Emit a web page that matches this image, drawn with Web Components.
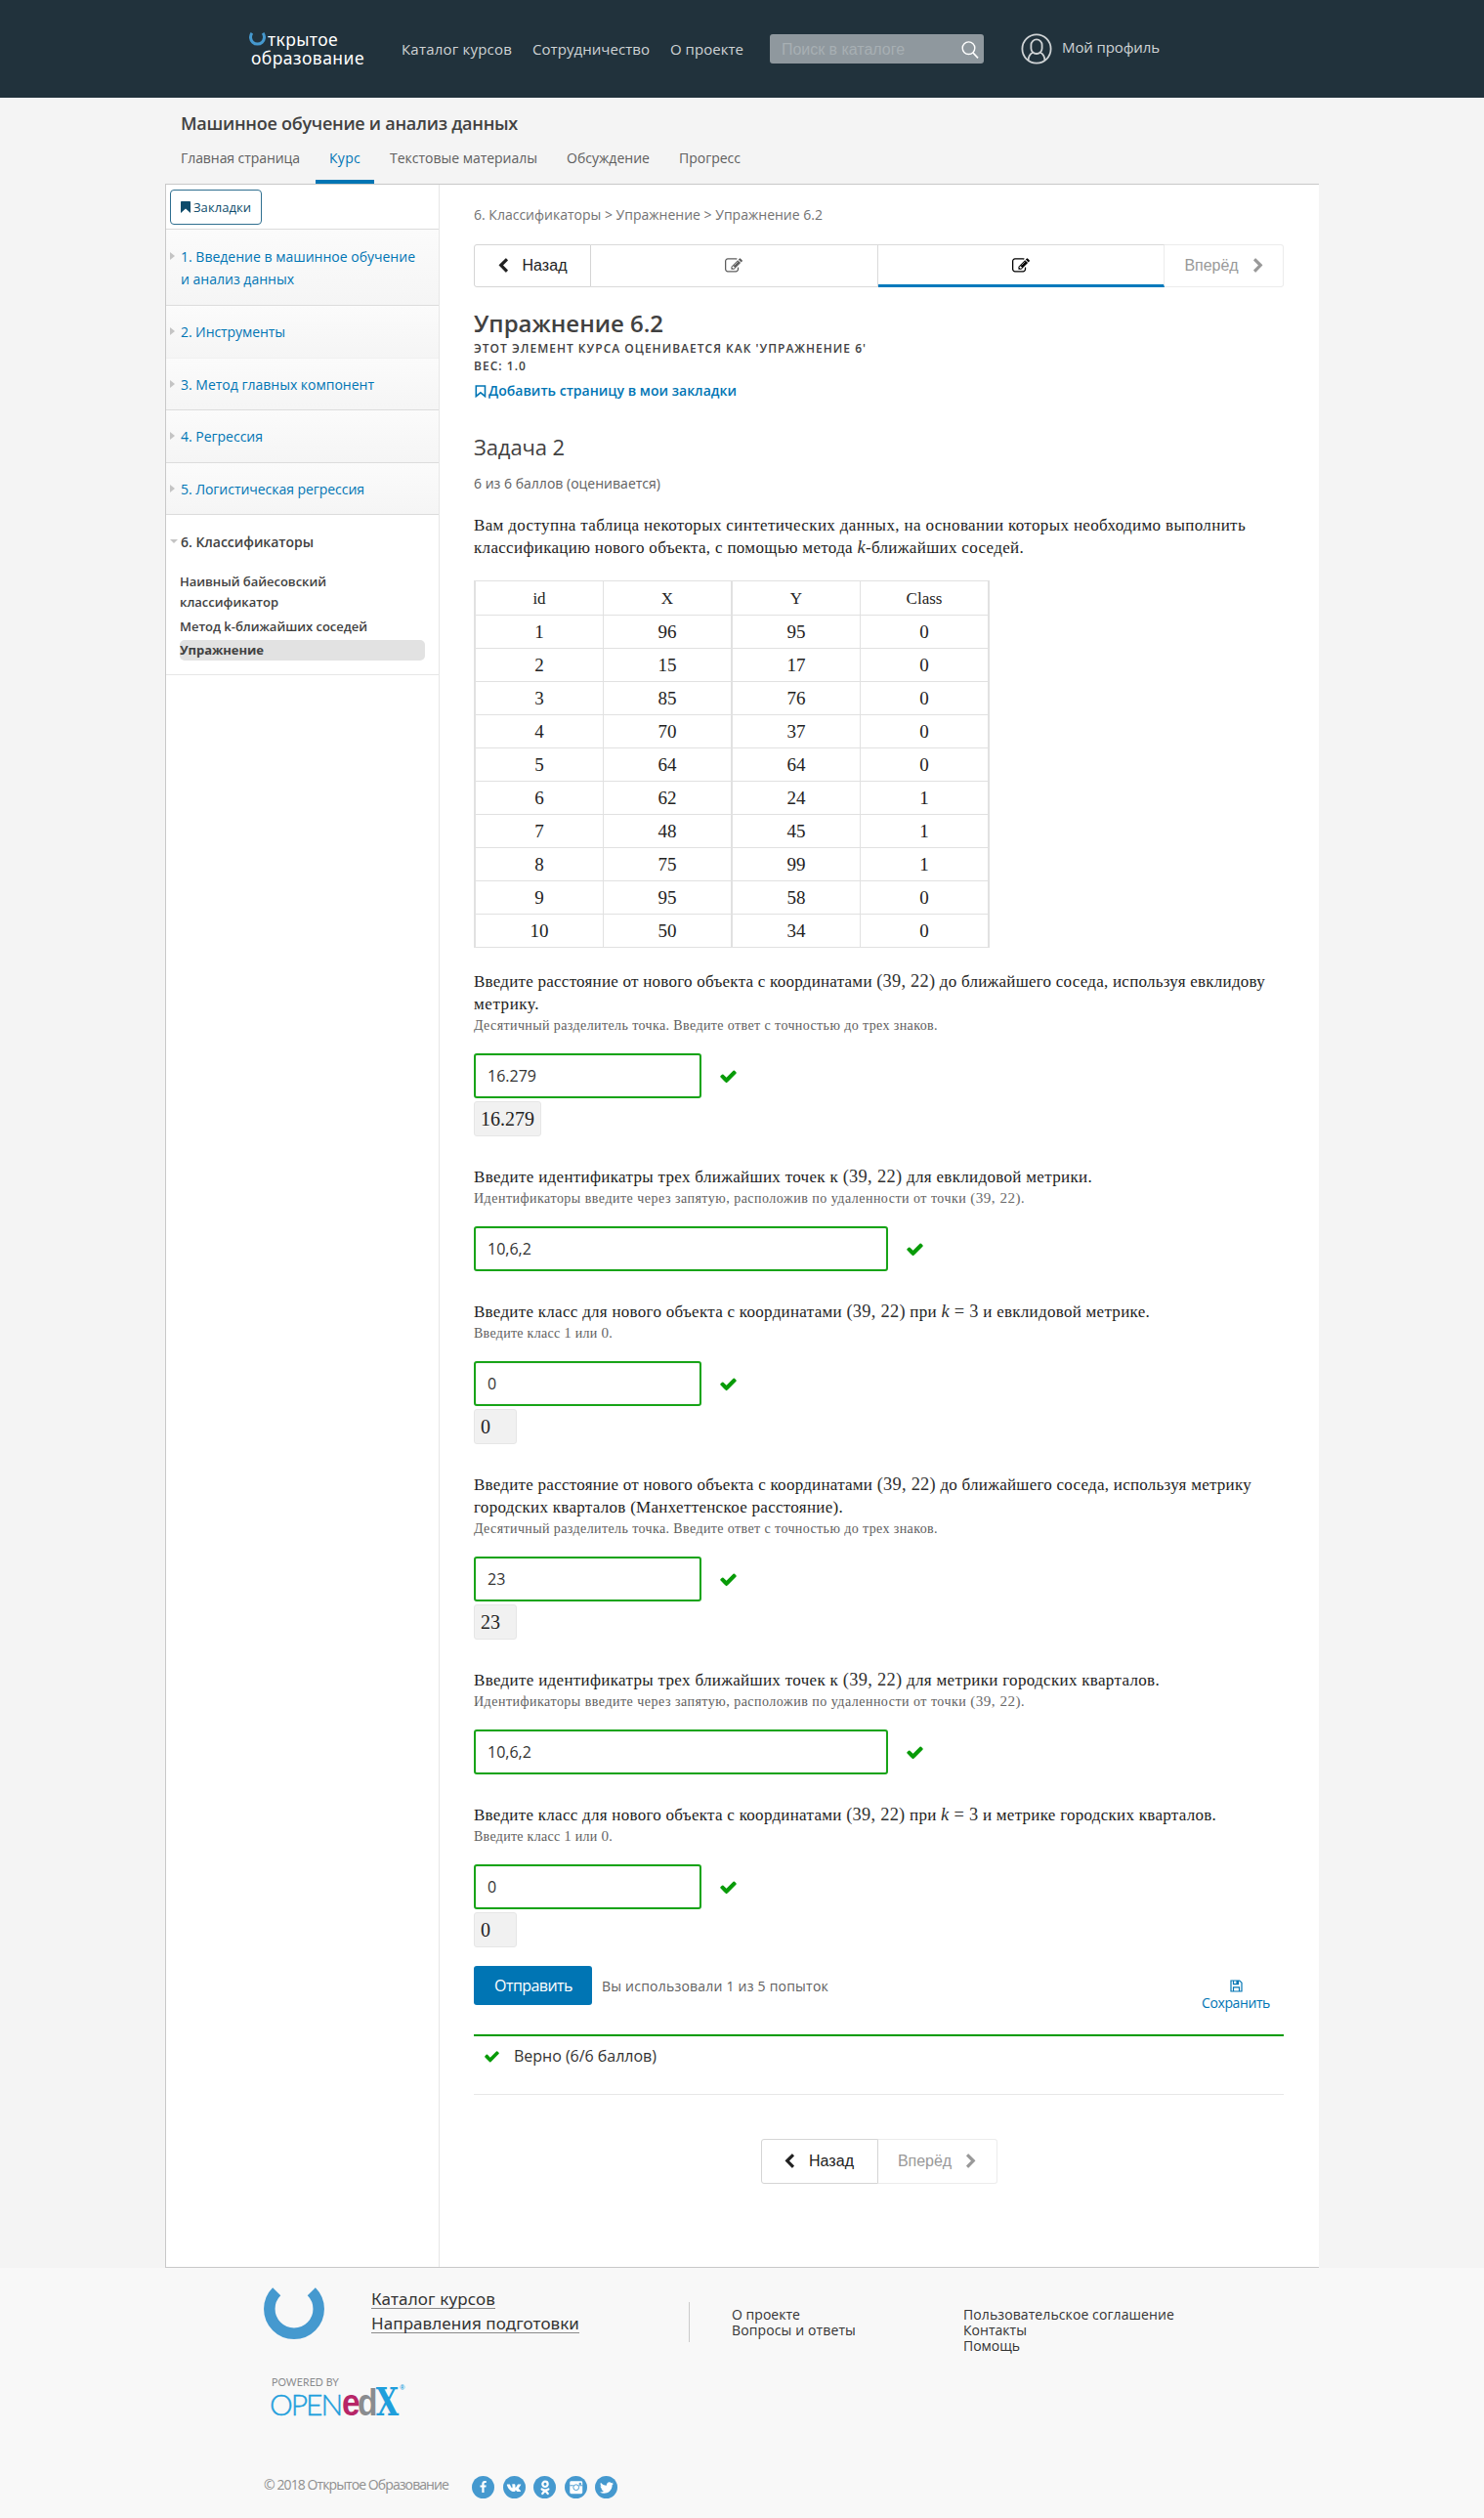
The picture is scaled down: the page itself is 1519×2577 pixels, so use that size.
<!DOCTYPE html>
<html lang="ru">
<head>
<meta charset="utf-8">
<title>Упражнение 6.2</title>
<style>
body{margin:0;background:#f4f4f4;font-family:"Open Sans","Noto Sans",sans-serif;color:#414141;width:1519px}
</style>
</head>
<body>
<site-header></site-header>
<course-tabs></course-tabs>
<course-frame>
  <course-sidebar slot="side"></course-sidebar>
  <lesson-head></lesson-head>
  <data-grid></data-grid>
  <problem-question value="16.279" preview="16.279">
    <fit-line w="810">Введите расстояние от нового объекта с координатами <math-run>(39, 22)</math-run> до ближайшего соседа, используя евклидову</fit-line>
    <fit-line w="67">метрику.</fit-line>
    <fit-line slot="hint" w="475">Десятичный разделитель точка. Введите ответ с точностью до трех знаков.</fit-line>
  </problem-question>
  <problem-question value="10,6,2" wide>
    <fit-line w="633">Введите идентификатры трех ближайших точек к <math-run>(39, 22)</math-run> для евклидовой метрики.</fit-line>
    <fit-line slot="hint" w="564">Идентификаторы введите через запятую, расположив по удаленности от точки <math-run>(39, 22)</math-run>.</fit-line>
  </problem-question>
  <problem-question value="0" preview="0">
    <fit-line w="692">Введите класс для нового объекта с координатами <math-run>(39, 22)</math-run> при <math-run><i>k</i> = 3</math-run> и евклидовой метрике.</fit-line>
    <fit-line slot="hint" w="142">Введите класс <math-run>1</math-run> или <math-run>0</math-run>.</fit-line>
  </problem-question>
  <problem-question value="23" preview="23">
    <fit-line w="796">Введите расстояние от нового объекта с координатами <math-run>(39, 22)</math-run> до ближайшего соседа, используя метрику</fit-line>
    <fit-line w="378">городских кварталов (Манхеттенское расстояние).</fit-line>
    <fit-line slot="hint" w="475">Десятичный разделитель точка. Введите ответ с точностью до трех знаков.</fit-line>
  </problem-question>
  <problem-question value="10,6,2" wide>
    <fit-line w="702">Введите идентификатры трех ближайших точек к <math-run>(39, 22)</math-run> для метрики городских кварталов.</fit-line>
    <fit-line slot="hint" w="564">Идентификаторы введите через запятую, расположив по удаленности от точки <math-run>(39, 22)</math-run>.</fit-line>
  </problem-question>
  <problem-question value="0" preview="0">
    <fit-line w="760">Введите класс для нового объекта с координатами <math-run>(39, 22)</math-run> при <math-run><i>k</i> = 3</math-run> и метрике городских кварталов.</fit-line>
    <fit-line slot="hint" w="142">Введите класс <math-run>1</math-run> или <math-run>0</math-run>.</fit-line>
  </problem-question>
  <problem-footer></problem-footer>
</course-frame>
<site-footer></site-footer>

<script>
const define = (name, html, setup) => customElements.define(name, class extends HTMLElement {
  connectedCallback() {
    if (this.shadowRoot) return;
    const root = this.attachShadow({ mode: 'open' });
    root.innerHTML = typeof html === 'function' ? html(this) : html;
    if (setup) setup(this, root);
  }
});

const FA = d => ({ box: '0 0 1792 1792', body: `<path fill="currentColor" d="${d}"/>` });
const ICONS = {
  check: FA('M1671 566q0 40-28 68l-724 724-136 136q-28 28-68 28t-68-28l-136-136-362-362q-28-28-28-68t28-68l136-136q28-28 68-28t68 28l294 295 656-657q28-28 68-28t68 28l136 136q28 28 28 68z'),
  left: FA('M1427 301l-531 531 531 531q19 19 19 45t-19 45l-166 166q-19 19-45 19t-45-19l-742-742q-19-19-19-45t19-45l742-742q19-19 45-19t45 19l166 166q19 19 19 45t-19 45z'),
  right: FA('M1363 877l-742 742q-19 19-45 19t-45-19l-166-166q-19-19-19-45t19-45l531-531-531-531q-19-19-19-45t19-45l166-166q19-19 45-19t45 19l742 742q19 19 19 45t-19 45z'),
  edit: FA('M888 1184l116-116-152-152-116 116v56h96v96h56zm440-720q-16-16-33 1l-350 350q-17 17-1 33t33-1l350-350q17-17 1-33zm80 594v190q0 119-84.5 203.5t-203.5 84.5h-832q-119 0-203.5-84.5t-84.5-203.5v-832q0-119 84.5-203.5t203.5-84.5h832q63 0 117 25 15 7 18 23 3 17-9 29l-49 49q-14 14-32 8-23-6-45-6h-832q-66 0-113 47t-47 113v832q0 66 47 113t113 47h832q66 0 113-47t47-113v-126q0-13 9-22l64-64q15-15 35-7t20 29zm-96-738l288 288-672 672h-288v-288zm444 132l-92 92-288-288 92-92q28-28 68-28t68 28l152 152q28 28 28 68t-28 68z'),
  twitter: FA('M1684 408q-67 98-162 167 1 14 1 42 0 130-38 259.5t-115.5 248.5-184.5 210.5-258 146-323 54.5q-271 0-496-145 35 4 78 4 225 0 401-138-105-2-188-64.5t-114-159.5q33 5 61 5 43 0 85-11-112-23-185.5-111.5t-73.5-205.5v-4q68 38 146 41-66-44-105-115t-39-154q0-88 44-163 121 149 294.5 238.5t371.5 99.5q-8-38-8-74 0-134 94.5-228.5t228.5-94.5q140 0 236 102 109-21 205-78-37 115-142 178 93-10 186-50z'),
  facebook: FA('M1343 12v264h-157q-86 0-116 36t-30 108v189h293l-39 296h-254v759h-306v-759h-255v-296h255v-218q0-186 104-288.5t277-102.5q147 0 228 12z'),
  bookmark: { box: '0 0 10 12', body: '<path fill="currentColor" d="M0 .8Q0 0 .8 0H9.2Q10 0 10 .8V12L5 7.6 0 12z"/>' },
  bookmarkO: { box: '0 0 12 13', body: '<path fill="none" stroke="currentColor" stroke-width="1.6" d="M1.3 1h9.2v10.6L5.9 7.8 1.3 11.6z"/>' },
  floppy: { box: '0 0 13 13', body: '<path fill="none" stroke="currentColor" stroke-width="1.2" d="M1 1h8.8L12 3.2V12H1zM3.5 12V7.8h6V12M3.5 1v3.6h5V1"/><path fill="currentColor" d="M6.4 1h2v3h-2z"/>' },
  search: { box: '0 0 18 18', body: '<circle cx="7.5" cy="7.2" r="6.3" fill="none" stroke="currentColor" stroke-width="1.4"/><path stroke="currentColor" stroke-width="1.7" d="M12 12l5 5.3"/>' },
  user: { box: '0 0 32 32', body: '<g fill="none" stroke="currentColor" stroke-width="1.8"><circle cx="16" cy="16" r="14.6"/><rect x="10.4" y="6.4" width="11.2" height="14.6" rx="5.6"/><path d="M7.6 27.6c.2-5 2-6.6 4.7-7.8M24.4 27.6c-.2-5-2-6.6-4.7-7.8"/></g>' },
  vk: { box: '0 0 24 24', body: '<path fill="currentColor" d="M4.5 8.8h2.3c.2 0 .4.1.5.4.5 1.5 1.3 2.9 2 3.5.4.3.6.1.6-.4v-1.9c0-.7-.2-1-.8-1.2.3-.5 1-.7 2-.7 1.5 0 1.9.3 1.9 1.3v2.1c0 .5.3.6.6.3.7-.7 1.4-1.8 1.9-3 .1-.3.3-.4.6-.4h2.4c.6 0 .7.3.5.7-.5 1.2-1.4 2.2-2.2 3.2-.4.5-.3.7.1 1.1.7.7 1.5 1.4 1.9 2.2.2.5 0 .8-.6.8h-2.3c-.8 0-1.2-.5-1.7-1-.7-.8-1.2-.9-1.2.2 0 .6-.2.8-.8.8-3.8.1-6.6-2.6-8.2-7.2-.1-.5 0-.8.5-.8z"/>' },
  ok: { box: '0 0 24 24', body: '<g fill="none" stroke="currentColor" stroke-width="2.4" stroke-linecap="round"><circle cx="12" cy="8" r="2.9"/><path d="M8.3 13.6c2.3 1.5 5.1 1.5 7.4 0M12 15l-3 3.6M12 15l3 3.6"/></g>' },
  photo: { box: '0 0 24 24', body: '<rect x="5.5" y="5.5" width="13.5" height="13.5" rx="1.5" fill="currentColor"/><g fill="none" stroke="#4599cf"><path d="M5.5 10.2h3.7M15 10.2h4"/><circle cx="12.2" cy="12.2" r="3"/><path d="M15.7 7.7h1.6v1.3h-1.6z"/></g>' }
};

/* Inline vector icon: name + size */
define('ui-icon', el => {
  const i = ICONS[el.getAttribute('name')], s = el.getAttribute('size') || 16;
  return `<style>:host{display:inline-flex;flex:none}svg{display:block}</style>
  <svg width="${s}" height="${el.getAttribute('h') || s}" viewBox="${i.box}" aria-hidden="true">${i.body}</svg>`;
});

/* Formula fragment in running text */
define('math-run', `<style>:host{font-family:"Liberation Serif",serif;font-size:1.08em;line-height:1;opacity:.93}</style><slot></slot>`);

/* Single line of text tracked to a given measure */
define('fit-line', `<style>:host{display:block;white-space:nowrap;flex:none}span{display:inline-block;line-height:inherit;vertical-align:top}</style><span><slot></slot></span>`,
  (el, root) => {
    const w = +el.getAttribute('w'), n = el.textContent.length;
    el.style.width = w + 'px';
    requestAnimationFrame(() => {
      const now = root.querySelector('span').getBoundingClientRect().width;
      if (now) el.style.letterSpacing = (w - now) / n + 'px';
    });
  });

define('site-header', `<style>
:host{display:flex;align-items:center;box-sizing:border-box;height:100px;background:#21323c;padding-left:255px;color:#cfd3d5;font-size:15px}
.logo{display:grid;width:156px;color:#fff;font-size:17.5px;line-height:19px;font-family:"Noto Sans","Open Sans",sans-serif;padding-bottom:1px}
.top{display:flex}.top svg{margin-right:2px}.second{margin-left:2px}
nav{display:flex;gap:21px;width:377px}
.search{display:flex;align-items:center;justify-content:space-between;box-sizing:border-box;width:219px;height:30px;padding:0 5px 0 12px;border-radius:3px;background:#8f989e;color:#a7afb3;font:16px "Liberation Sans",sans-serif;margin-right:38px}
ui-icon{color:#fff}.search ui-icon{margin-top:1px}.search fit-line{padding-top:1px}
.me{display:flex;align-items:center;gap:10px}.me ui-icon{color:#cfd3d5}.me fit-line{padding-bottom:4px}
</style>
<div class="logo"><div class="top"><svg width="17" height="18" viewBox="0 0 17 18"><path d="M2.9 2.9A7 7 0 1 0 14.1 2.9" fill="none" stroke="#4599cf" stroke-width="3"/></svg><fit-line w="72">ткрытое</fit-line></div><fit-line class="second" w="116">образование</fit-line></div>
<nav><fit-line w="113">Каталог курсов</fit-line><fit-line w="120">Сотрудничество</fit-line><fit-line w="75">О проекте</fit-line></nav>
<div class="search"><fit-line w="126">Поиск в каталоге</fit-line><ui-icon name="search" size="18"></ui-icon></div>
<div class="me"><ui-icon name="user" size="32"></ui-icon><fit-line w="100">Мой профиль</fit-line></div>`);

define('course-tabs', `<style>
:host{display:block;box-sizing:border-box;height:88px;padding:13px 0 0 185px;color:#5e5e5e;font-size:14px}
h1{margin:0;font-size:18px;font-weight:600;line-height:26px;color:#414141}
nav{display:flex;gap:30px;margin-top:13px;line-height:20px}
.on{color:#0075b4;padding:0 14px 12px;margin:0 -14px;border-bottom:4px solid #0075b4}
</style>
<h1><fit-line w="345">Машинное обучение и анализ данных</fit-line></h1>
<nav><fit-line w="122">Главная страница</fit-line><div class="on"><fit-line w="32">Курс</fit-line></div><fit-line w="151">Текстовые материалы</fit-line><fit-line w="85">Обсуждение</fit-line><fit-line w="63">Прогресс</fit-line></nav>`);

define('course-frame', `<style>
:host{display:flex;box-sizing:border-box;width:1181px;height:2133px;margin-left:169px;background:#fff;border:solid #c8c8c8;border-width:1px 0 1px 1px}
aside{flex:none;width:279px;border-right:1px solid #e7e7e7}
main{flex:none;width:829px;padding:21px 36px 0 35px}
</style><aside><slot name="side"></slot></aside><main><slot></slot></main>`);

define('side-chapter', `<style>
:host{display:flex;box-sizing:border-box;padding:15px 0 0 4px;height:54px;border-bottom:1px solid #dcdcdc;background:linear-gradient(#fbfbfb,#f5f5f5);color:#0075b4;font-size:14px;line-height:23px}
i{flex:none;width:0;height:0;margin:7px 6px 0 0;border:solid transparent;border-width:4px 0 4px 5px;border-left-color:#c4c4c4}
:host([open]) i{border-width:4px 4px 0 4px;border-color:#c4c4c4 transparent transparent;margin:9px 3px 0 0}
</style><i></i><div><slot></slot></div>`);

define('course-sidebar', `<style>
:host{display:block}
.mark{box-sizing:border-box;height:46px;padding:5px 0 0 4px;border-bottom:1px solid #dcdcdc}
button{display:flex;align-items:center;gap:3px;box-sizing:border-box;width:94px;height:36px;padding:0 0 0 10px;border:1px solid #2f6f90;border-radius:4px;background:#fff;color:#0d4b6b;font:13px "Open Sans",sans-serif}
.open{background:#fff;border:0;color:#414141;font-weight:600;height:auto;padding-top:16px}
.sub{padding:19px 14px 14px 14px;font-size:13px;line-height:21px;font-weight:600;color:#414141;border-bottom:1px solid #e7e7e7}
.sub .m{margin:4px 0 3px}
.cur{background:#e2e2e2;border-radius:5px;font-weight:700}
</style>
<div class="mark"><button><ui-icon name="bookmark" size="10" h="12"></ui-icon><fit-line w="59">Закладки</fit-line></button></div>
<side-chapter style="height:78px;padding-top:16px"><fit-line w="240">1. Введение в машинное обучение</fit-line><fit-line w="116">и анализ данных</fit-line></side-chapter>
<side-chapter style="border-color:#f0f0f0"><fit-line w="107">2. Инструменты</fit-line></side-chapter>
<side-chapter style="height:53px"><fit-line w="198">3. Метод главных компонент</fit-line></side-chapter>
<side-chapter><fit-line w="84">4. Регрессия</fit-line></side-chapter>
<side-chapter style="height:53px"><fit-line w="188">5. Логистическая регрессия</fit-line></side-chapter>
<side-chapter class="open" open><fit-line w="136">6. Классификаторы</fit-line></side-chapter>
<div class="sub"><fit-line w="150">Наивный байесовский</fit-line><fit-line w="101">классификатор</fit-line><fit-line class="m" w="192">Метод k-ближайших соседей</fit-line><div class="cur"><fit-line w="86">Упражнение</fit-line></div></div>`);

define('nav-button', el => {
  const next = el.hasAttribute('next');
  const icon = `<ui-icon name="${next ? 'right' : 'left'}" size="16"></ui-icon>`;
  return `<style>:host{display:flex;align-items:center;justify-content:center;gap:12px;box-sizing:border-box;flex:none;font:16px "Liberation Sans",sans-serif;padding-${next ? 'left' : 'right'}:3px;color:${next ? '#999' : '#222'};border:1px solid ${next ? '#ececec' : '#d5d5d5'};${next ? 'border-left:0;border-radius:0 3px 3px 0' : 'border-radius:3px 0 0 3px'}}</style>
  ${next ? `<fit-line w="55">Вперёд</fit-line>${icon}` : `${icon}<fit-line w="46">Назад</fit-line>`}`;
});

define('lesson-head', `<style>
:host{display:block;font-size:14px;line-height:20px}
.crumb{color:#727272}
.seq{display:flex;height:44px;margin:20px 0}
.seq nav-button{width:120px}.seq nav-button[next]{width:122px}
.tab{flex:1;display:flex;align-items:center;justify-content:center;border:solid #dadada;border-width:1px 1px 1px 0;color:#5e5e5e}
.tab.on{color:#000;border-bottom:3px solid #0079bc;border-right-color:#ececec}.tab.on ui-icon{margin-top:2px}
h2{margin:0;font-size:24px;line-height:34px;font-weight:600}
.meta{font-size:12px;line-height:18px;font-weight:600}
.link{display:flex;align-items:center;gap:2px;margin:6px 0 32px;padding-left:1px;font-weight:600;color:#0075b4}
h3{margin:0 0 13px;font-size:22px;line-height:30px;font-weight:400}
.score{color:#5e5e5e}
p{margin:21px 0 22px;font:17px/23px "Liberation Serif",serif;color:#222}
</style>
<div class="crumb"><fit-line w="357">6. Классификаторы &gt; Упражнение &gt; Упражнение 6.2</fit-line></div>
<div class="seq"><nav-button></nav-button><div class="tab"><ui-icon name="edit" size="18"></ui-icon></div><div class="tab on"><ui-icon name="edit" size="18"></ui-icon></div><nav-button next></nav-button></div>
<h2><fit-line w="194">Упражнение 6.2</fit-line></h2>
<div class="meta"><fit-line w="402">ЭТОТ ЭЛЕМЕНТ КУРСА ОЦЕНИВАЕТСЯ КАК 'УПРАЖНЕНИЕ 6'</fit-line><fit-line w="54">ВЕС: 1.0</fit-line></div>
<div class="link"><ui-icon name="bookmarkO" size="12" h="13"></ui-icon><fit-line w="254">Добавить страницу в мои закладки</fit-line></div>
<h3><fit-line w="93">Задача 2</fit-line></h3>
<div class="score"><fit-line w="191">6 из 6 баллов (оценивается)</fit-line></div>
<p><fit-line w="790">Вам доступна таблица некоторых синтетических данных, на основании которых необходимо выполнить</fit-line><fit-line w="563">классификацию нового объекта, с помощью метода <math-run><i>k</i></math-run>-ближайших соседей.</fit-line></p>`);

const ROWS = [[1,96,95,0],[2,15,17,0],[3,85,76,0],[4,70,37,0],[5,64,64,0],[6,62,24,1],[7,48,45,1],[8,75,99,1],[9,95,58,0],[10,50,34,0]];
define('data-grid', `<style>
:host{display:grid;grid-template-columns:131px 132px 131px 130px;box-sizing:border-box;width:528px;border:solid #e1e1e1;border-width:1px 2px 0;margin-bottom:23px;font:19px/33px "Liberation Serif",serif;color:#222;text-align:center}
div{border:solid #e1e1e1;border-width:0 1px 1px 0}
div:nth-of-type(4n+2){border-right-width:2px}div:nth-of-type(4n){border-right:0}
.h{font-size:17px;line-height:33px;padding-top:1px}
</style>${['id','X','Y','Class'].map(t => `<div class="h">${t}</div>`).join('')}${ROWS.flat().map(t => `<div>${t}</div>`).join('')}`);

define('problem-question', el => `<style>
:host{display:block;margin-bottom:30px;font:17px/23px "Liberation Serif",serif;color:#222}
.hint{margin:2px 0 19px;font-size:14px;line-height:18px;color:#5e5e5e}
.row{display:flex;align-items:center;gap:18px}
.box{box-sizing:border-box;width:${el.hasAttribute('wide') ? 424 : 233}px;height:46px;padding-left:12px;border:2px solid #18a418;border-radius:3px;background:#fff;font:16px/42px "Open Sans",sans-serif;color:#333;box-shadow:inset 0 0 2px #ddd}
ui-icon{color:#089b08;margin-top:1px}
.pre{display:inline-flex;box-sizing:border-box;min-width:44px;height:36px;margin-top:3px;padding:0 6px;border:1px solid #e6e6e6;border-radius:3px;background:#f1f1f1;font-size:20px;line-height:34px;vertical-align:top}
</style><slot></slot><div class="hint"><slot name="hint"></slot></div>
<div class="row"><div class="box">${el.getAttribute('value')}</div><ui-icon name="check" size="19"></ui-icon></div>
${el.hasAttribute('preview') ? `<div class="pre">${el.getAttribute('preview')}</div>` : ''}`);

define('problem-footer', `<style>
:host{display:block;margin-top:-11px;font-size:14px;line-height:20px}
.act{display:flex;align-items:flex-start;height:70px;color:#5e5e5e}
button{width:121px;height:40px;margin-right:10px;padding:0 0 0 21px;border:0;border-radius:3px;background:#0075b4;color:#fff;font:16px "Open Sans",sans-serif;text-align:left}
.used{margin-top:11px}
.save{display:flex;flex-direction:column;align-items:center;margin:14px 14px 0 auto;color:#0075b4}.save fit-line{margin-top:1px}
.ok{display:flex;align-items:flex-start;gap:14px;height:51px;padding:8px 0 0 10px;border-top:2px solid #009b00;border-bottom:1px solid #e7e7e7;font-size:16px;line-height:24px;color:#333}
.ok ui-icon{color:#089b08;margin-top:4px}
.nav{display:flex;justify-content:center;height:46px;margin-top:45px}
.nav nav-button{width:120px}.nav nav-button[next]{width:122px}
</style>
<div class="act"><button><fit-line w="80">Отправить</fit-line></button><fit-line class="used" w="232">Вы использовали 1 из 5 попыток</fit-line><div class="save"><ui-icon name="floppy" size="13"></ui-icon><fit-line w="70">Сохранить</fit-line></div></div>
<div class="ok"><ui-icon name="check" size="17"></ui-icon><fit-line w="146">Верно (6/6 баллов)</fit-line></div>
<div class="nav"><nav-button></nav-button><nav-button next></nav-button></div>`);

define('social-dot', el => `<style>:host{display:flex;align-items:center;justify-content:center;width:23px;height:23px;border-radius:50%;background:#4599cf;color:#fff}</style><ui-icon name="${el.getAttribute('name')}" size="${el.getAttribute('size') || 23}"></ui-icon>`);

define('site-footer', `<style>
:host{display:block;box-sizing:border-box;height:256px;padding:20px 0 0 270px;background:#f8f8f8;color:#333;font:14px/16px "Open Sans",sans-serif}
.top{display:grid;grid-template-columns:110px 325px 44px 237px auto;height:90px}
.big{font-size:17px;line-height:25px;font-family:"Noto Sans",sans-serif}
.big fit-line{box-sizing:border-box;height:22px;border-bottom:1.5px solid #8b8b8b;line-height:24px;margin-bottom:3px}
.rule{width:1px;height:41px;margin-top:15px;background:#cbcbcb}
.c{margin-top:20px}
.pow{margin-left:8px;font-size:10.5px;line-height:14px;color:#8a8c8e;font-family:Lato,"Open Sans",sans-serif}
.edx{display:flex;align-items:baseline;margin:3px 0 0 6px;height:24px;font-size:30px;line-height:20px}
.open{color:#1f9fdc;font-weight:300;font-family:Lato,"Open Sans",sans-serif;-webkit-text-stroke:.4px #1f9fdc}
.brand{display:flex;align-items:baseline;font-family:"Liberation Sans",sans-serif;font-weight:700;font-size:39px;line-height:20px;transform:scaleX(.86);transform-origin:0 50%;margin-left:1px}
.e{color:#b72667}.d{color:#8a8c8f;margin-left:-3px}.x{font-family:"DejaVu Serif Condensed","DejaVu Serif",serif;font-stretch:condensed;color:#1f9fdc;margin-left:-2px}
.r{font-size:8px;line-height:8px;color:#1f9fdc;margin-left:1px;align-self:flex-start;margin-top:-8px}
.bot{display:flex;align-items:center;margin-top:62px;color:#8f8f8f}
.bot fit-line{padding-bottom:5px;margin-right:24px}
.soc{display:flex;gap:8.5px}
</style>
<div class="top"><svg width="62" height="53" viewBox="0 0 62 53"><path d="M13.2 4.2A25.2 25.2 0 1 0 48.8 4.2" fill="none" stroke="#4599cf" stroke-width="11.5"/></svg>
<div class="big"><fit-line w="127">Каталог курсов</fit-line><fit-line w="213">Направления подготовки</fit-line></div><div class="rule"></div>
<div class="c"><fit-line w="70">О проекте</fit-line><fit-line w="127">Вопросы и ответы</fit-line></div>
<div class="c"><fit-line w="216">Пользовательское соглашение</fit-line><fit-line w="65">Контакты</fit-line><fit-line w="58">Помощь</fit-line></div></div>
<div class="pow"><fit-line w="69">POWERED BY</fit-line></div>
<div class="edx"><fit-line class="open" w="73">OPEN</fit-line><div class="brand"><span class="e">e</span><span class="d">d</span><span class="x">X</span><span class="r">®</span></div></div>
<div class="bot"><fit-line w="189">© 2018 Открытое Образование</fit-line><div class="soc"><social-dot name="facebook" size="13"></social-dot><social-dot name="vk"></social-dot><social-dot name="ok" size="22"></social-dot><social-dot name="photo"></social-dot><social-dot name="twitter" size="16"></social-dot></div></div>`);
</script>
</body>
</html>
